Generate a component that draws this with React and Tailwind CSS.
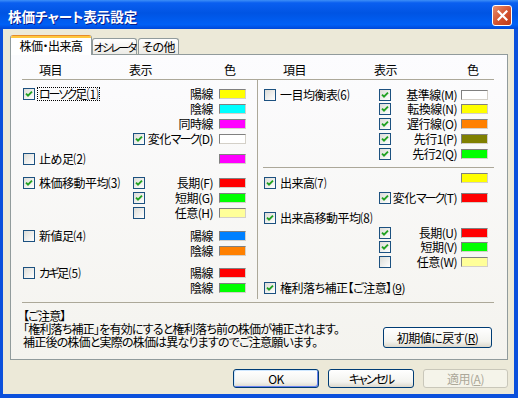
import React from "react";

const FONT = "font-['Noto_Sans_CJK_JP','Noto_Sans_CJK_SC',sans-serif] [font-feature-settings:'palt']";

function K({ children }) {
  return <span className="tracking-[-2px]">{children}</span>;
}

function Check({ checked }) {
  return (
    <span className="inline-flex w-[12px] h-[12px] shrink-0 border border-[#1c5180] bg-[linear-gradient(135deg,#dcdcd7,#ffffff)] items-center justify-center">
      {checked && (
        <svg width="8" height="8" viewBox="0 0 8 8">
          <path d="M1 3.6 L3 5.6 L7 1.6" stroke="#21a121" strokeWidth="1.9" fill="none" />
        </svg>
      )}
    </span>
  );
}

function Swatch({ c }) {
  return (
    <span className={"block w-[27px] h-[10px] shrink-0 border border-t-[#808080] border-l-[#808080] border-r-[#d4d0c8] border-b-[#d4d0c8] " + c} />
  );
}

function LRow({ h = "h-[15px]", main, mainChecked, focus, sub, subChecked, label, c, extra = "" }) {
  return (
    <div className={"flex items-center " + h + " " + extra}>
      <div className="w-[111px] pl-[1px] flex items-center gap-[3px] whitespace-nowrap">
        {main !== undefined && (
          <>
            <Check checked={mainChecked} />
            <span className={focus ? "outline outline-1 outline-dotted outline-black px-[1px] leading-[12px]" : "px-[1px]"}>{main}</span>
          </>
        )}
      </div>
      <div className="w-[12px] flex items-center">{sub && <Check checked={subChecked} />}</div>
      <div className="flex-1 text-right whitespace-nowrap">{label}</div>
      <div className="w-[6px]" />
      {c ? <Swatch c={c} /> : <span className="w-[27px]" />}
      <div className="w-[11px]" />
    </div>
  );
}

function RRow({ h = "h-[15px]", main, mainChecked, sub, subChecked, label, c, extra = "", swatchCls = "" }) {
  return (
    <div className={"flex items-center " + h + " " + extra}>
      <div className="w-[121px] pl-[6px] flex items-center gap-[3px] whitespace-nowrap">
        {main !== undefined && (
          <>
            <Check checked={mainChecked} />
            <span className="px-[1px]">{main}</span>
          </>
        )}
      </div>
      <div className="w-[12px] flex items-center">{sub && <Check checked={subChecked} />}</div>
      <div className="flex-1 text-right whitespace-nowrap">{label}</div>
      <div className="w-[4px]" />
      <div className={swatchCls}>{c ? <Swatch c={c} /> : <span className="block w-[27px]" />}</div>
      <div className="w-[6px]" />
    </div>
  );
}

function Btn({ children, w = "w-[86px]", h = "h-[19px]", def, disabled }) {
  const base = "flex items-center justify-center rounded-[3px] border whitespace-nowrap " + w + " " + h + " ";
  if (disabled) {
    return <div className={base + "border-[#c9c7ba] bg-[#f5f4ea] text-[#aca899]"}>{children}</div>;
  }
  return (
    <div
      className={
        base +
        "border-[#003c74] bg-[linear-gradient(to_bottom,#ffffff,#f3f3ef_70%,#dcd8cc)] text-black " +
        (def ? "shadow-[inset_1px_1px_0_#cee7ff,inset_-1px_-1px_0_#6982ee]" : "")
      }
    >
      {children}
    </div>
  );
}

export default function App() {
  return (
    <div className={"w-[518px] h-[398px] bg-[#0b50dc] flex flex-col text-[12px] leading-[14px] tracking-[-0.5px] text-black " + FONT}>
      {/* title bar */}
      <div className="h-[29px] shrink-0 flex items-center justify-between pl-[8px] pr-[6px] bg-[linear-gradient(to_bottom,#3d8ff7_0%,#0a5ff0_10%,#0054e3_45%,#0060f6_85%,#0048d8_100%)]">
        <span className="text-white font-bold text-[13.5px] leading-[16px] tracking-normal pt-[3px] [text-shadow:1px_1px_0_#0a1e8c]">株価チャート表示設定</span>
        <div className="w-[20px] h-[21px] mt-[1px] rounded-[3px] border border-white bg-[linear-gradient(135deg,#e8906f,#d3512d_55%,#bf3a18)] flex items-center justify-center">
          <svg width="11" height="11" viewBox="0 0 11 11">
            <path d="M1.5 1.5 L9.5 9.5 M9.5 1.5 L1.5 9.5" stroke="white" strokeWidth="2.2" strokeLinecap="square" />
          </svg>
        </div>
      </div>
      {/* body */}
      <div className="flex-1 ml-[3px] mr-[4px] mb-[4px] bg-[#ece9d8] pt-[6px] pl-[7px] pr-[6px] flex flex-col">
        {/* tabs */}
        <div className="flex items-end h-[19px] relative z-10">
          <div className="w-[82px] h-[20px] -mb-px bg-white border-x border-[#919b9c] rounded-t-[3px] flex flex-col overflow-hidden">
            <div className="h-px bg-[#e68b2c]" />
            <div className="h-[2px] bg-[#ffc73c]" />
            <div className="flex-1 flex items-center justify-center pb-[2px] whitespace-nowrap">株価・出来高</div>
          </div>
          <div className="w-[45px] h-[16px] border-x border-t border-[#919b9c] rounded-t-[3px] bg-[linear-gradient(to_bottom,#ffffff,#ecebe6)] flex items-center justify-center whitespace-nowrap text-[11px] tracking-[-1.8px]">
            オシレータ
          </div>
          <div className="w-[41px] ml-[1px] h-[16px] border-x border-t border-[#919b9c] rounded-t-[3px] bg-[linear-gradient(to_bottom,#ffffff,#ecebe6)] flex items-center justify-center whitespace-nowrap">その他</div>
        </div>
        {/* panel */}
        <div className="h-[306px] shrink-0 border border-[#919b9c] bg-[linear-gradient(to_bottom,#fcfcfe,#f4f3ee)]">
          <div className="ml-[11px] mr-[13px] flex flex-col">
            <div className="flex h-[24px] items-center pt-[6px]">
              <div className="w-[236px] flex">
                <span className="ml-[17px] w-[90px]">項目</span>
                <span className="w-[95px]">表示</span>
                <span>色</span>
              </div>
              <div className="w-[236px] flex">
                <span className="ml-[25px] w-[91px]">項目</span>
                <span className="w-[93px]">表示</span>
                <span>色</span>
              </div>
            </div>
            <div className="h-px bg-[#aca899]" />
            <div className="flex h-[219px]">
              {/* left column */}
              <div className="w-[235px] flex flex-col pt-[6px]">
                <LRow main={<><K>ローソク</K>足⑴</>} mainChecked focus label="陽線" c="bg-[#ffff00]" />
                <LRow label="陰線" c="bg-[#00ffff]" />
                <LRow label="同時線" c="bg-[#ff00ff]" />
                <LRow sub subChecked label={<>変化<K>マーク</K>(D)</>} c="bg-[#ffffff]" />
                <LRow main="止め足⑵" label="" c="bg-[#ff00ff]" extra="mt-[5px]" />
                <LRow main="株価移動平均⑶" mainChecked sub subChecked label="長期(F)" c="bg-[#ff0000]" extra="mt-[9px]" />
                <LRow sub subChecked label="短期(G)" c="bg-[#00ff00]" />
                <LRow sub label="任意(H)" c="bg-[#ffff99]" />
                <LRow main="新値足⑷" label="陽線" c="bg-[#0080ff]" extra="mt-[8px]" />
                <LRow label="陰線" c="bg-[#ff8000]" />
                <LRow main={<><K>カギ</K>足⑸</>} label="陽線" c="bg-[#ff0000]" extra="mt-[7px]" />
                <LRow label="陰線" c="bg-[#00ff00]" />
              </div>
              <div className="w-px bg-[#aca899]" />
              {/* right column */}
              <div className="w-[236px] flex flex-col pt-[7px]">
                <RRow main="一目均衡表⑹" sub subChecked label="基準線(M)" c="bg-[#ffffff]" />
                <RRow h="h-[14px]" sub subChecked label="転換線(N)" c="bg-[#ffff00]" />
                <RRow sub subChecked label="遅行線(O)" c="bg-[#ff8000]" />
                <RRow sub subChecked label="先行1(P)" c="bg-[#808000]" />
                <RRow sub subChecked label="先行2(Q)" c="bg-[#00ff00]" />
                <div className="mt-[6px] ml-[5px] h-px bg-[#aca899]" />
                <RRow main="出来高⑺" mainChecked label="" c="bg-[#ffff00]" extra="mt-[7px]" swatchCls="-mt-[9px]" />
                <RRow sub subChecked label={<>変化<K>マーク</K>(T)</>} c="bg-[#ff0000]" />
                <RRow main="出来高移動平均⑻" mainChecked label="" extra="mt-[5px]" />
                <RRow sub subChecked label="長期(U)" c="bg-[#ff0000]" />
                <RRow h="h-[14px]" sub subChecked label="短期(V)" c="bg-[#00ff00]" />
                <RRow sub label="任意(W)" c="bg-[#ffff99]" />
                <div className="flex items-center h-[15px] mt-[11px] pl-[6px] gap-[3px] whitespace-nowrap">
                  <Check checked />
                  <span className="px-[1px]">
                    権利落ち補正【ご注意】(<span className="underline">9</span>)
                  </span>
                </div>
              </div>
            </div>
            <div className="mt-[3px] h-px bg-[#aca899]" />
            <div className="flex justify-between mt-[6px]">
              <div className="leading-[13px] tracking-[-0.8px] pl-[1px] whitespace-nowrap">
                <div>【ご注意】</div>
                <div>「権利落ち補正」を有効にすると権利落ち前の株価が補正されます。</div>
                <div>補正後の株価と実際の株価は異なりますのでご注意願います。</div>
              </div>
              <div className="mt-[18px] mr-[2px]">
                <Btn w="w-[109px]" h="h-[21px]">
                  初期値に戻す(<span className="underline">R</span>)
                </Btn>
              </div>
            </div>
          </div>
        </div>
        {/* bottom buttons */}
        <div className="flex justify-end gap-[9px] mt-[9px]">
          <Btn def>OK</Btn>
          <Btn>
            <K>キャンセル</K>
          </Btn>
          <Btn w="w-[85px]" disabled>
            適用(<span className="underline">A</span>)
          </Btn>
        </div>
      </div>
    </div>
  );
}
